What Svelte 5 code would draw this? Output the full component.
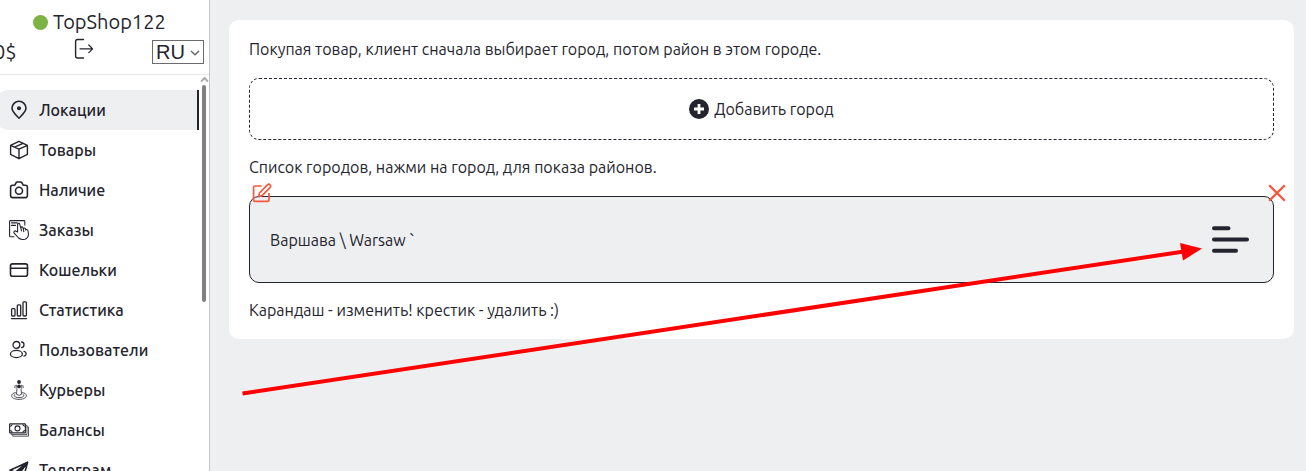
<script>
  const items = [
    { icon: 'pin', label: 'Локации' },
    { icon: 'box', label: 'Товары' },
    { icon: 'camera', label: 'Наличие' },
    { icon: 'order', label: 'Заказы' },
    { icon: 'card', label: 'Кошельки' },
    { icon: 'chart', label: 'Статистика' },
    { icon: 'users', label: 'Пользователи' },
    { icon: 'courier', label: 'Курьеры' },
    { icon: 'cash', label: 'Балансы' },
    { icon: 'plane', label: 'Телеграм' }
  ];
  const active = 'pin';
</script>

<div class="page">
  <aside class="sidebar">
    <header class="head">
      <div class="shop"><span class="dot"></span>TopShop122</div>
      <div class="tools">
        <span class="balance">0$</span>
        <button class="plain exit" aria-label="Выход">
          <svg width="20" height="22" viewBox="0 0 20 22" fill="none" stroke="#24242e" stroke-linecap="round" stroke-linejoin="round">
            <path stroke-width="1.4" d="M9.5 1.5H3.5Q1.6 1.5 1.6 3.5V18Q1.6 20 3.5 20H9.5" />
            <path stroke-width="1.2" d="M6 10.8H18.5M14.8 7L18.6 10.8L14.8 14.6" />
          </svg>
        </button>
        <span class="lang">
          <select aria-label="Язык"><option>RU</option></select>
          <svg width="10" height="6" viewBox="0 0 10 6" fill="none" stroke="#666" stroke-width="1.4"><path d="M1 1L5 4.8L9 1" /></svg>
        </span>
      </div>
    </header>

    <div class="body">
      <nav>
        {#each items as item}
          <a href="#{item.icon}" class:active={item.icon === active}>
            <svg width="20" height="20" viewBox="0 0 20 20" fill="none" stroke="#24242e" stroke-width="1.6" stroke-linecap="round" stroke-linejoin="round">
              {#if item.icon === 'pin'}
                <path d="M10 18.2C7.2 15.2 3 11.5 3 8.2A7 6.9 0 0 1 17 8.2C17 11.5 12.8 15.2 10 18.2Z" />
                <circle cx="10" cy="8.3" r="2" fill="#24242e" stroke="none" />
              {:else if item.icon === 'box'}
                <path stroke-width="1.4" d="M10 1.4L18.4 5.4V14.4L10 18.7L1.6 14.4V5.4ZM1.6 5.4L10 9.2L18.4 5.4M10 9.2V18.7M5.6 7.2L14 3.3" />
              {:else if item.icon === 'camera'}
                <path d="M3.6 5.2H5.2Q6 5.2 6.4 4.2L7 2.9Q7.4 2 8.4 2H11.6Q12.6 2 13 2.9L13.6 4.2Q14 5.2 14.8 5.2H16.4Q18.4 5.2 18.4 7.2V15.6Q18.4 17.6 16.4 17.6H3.6Q1.6 17.6 1.6 15.6V7.2Q1.6 5.2 3.6 5.2Z" />
                <circle cx="10" cy="10.8" r="3.5" />
              {:else if item.icon === 'order'}
                <path stroke-width="1.1" d="M5 16.8H1.4Q.6 16.8.6 16V1.4Q.6.6 1.4.6H15Q15.8.6 15.8 1.4V5" />
                <path stroke-width="1.3" d="M2.6 2.8H8M2.6 5.4H6.4" />
                <path stroke-width="1.1" fill="#fff" d="M8.6 12L8.6 4.4Q8.7 3.4 9.6 3.4Q10.6 3.4 10.8 4.4L12 8.6V7.6Q12.2 6.8 13 6.9Q13.8 7 14 7.8L14.4 9.4V8.6Q14.8 7.8 15.6 8.1Q16.3 8.3 16.5 9.2L16.8 10.2Q17 9.2 17.9 9.5Q18.8 9.8 19 11L19.5 14Q19.4 18 16 19.2Q12 20 9.6 18L5 12.8Q4.6 11.8 5.4 11.2Q6.4 10.6 7.2 11.2ZM12 8.6L12.5 11M14.4 9.4L14.8 11.6" />
              {:else if item.icon === 'card'}
                <rect x="1.5" y="3.9" width="17" height="12.4" rx="2" />
                <path d="M1.5 8.2H18.5" />
              {:else if item.icon === 'chart'}
                <path stroke-width="1.3" d="M2.5 18.6H17.5" />
                <rect x="2.6" y="8.6" width="3.4" height="7.4" rx=".9" stroke-width="1.3" />
                <rect x="8.3" y="4.9" width="3.4" height="11.1" rx=".9" stroke-width="1.3" />
                <rect x="14" y="1.9" width="3.4" height="14.1" rx=".9" stroke-width="1.3" />
              {:else if item.icon === 'users'}
                <g stroke-width="1.3">
                  <circle cx="7.4" cy="4.9" r="3.4" />
                  <ellipse cx="7.4" cy="14" rx="6" ry="3.6" />
                  <path d="M12.6 2C15.8 2.2 15.8 7.4 12.6 7.6M15 11.4C17.8 12 17.8 15.6 15 16.2" />
                </g>
              {:else if item.icon === 'courier'}
                <g stroke-width=".9">
                  <circle cx="10" cy="2" r="1.9" fill="#24242e" stroke="none" />
                  <circle cx="10" cy="6.4" r="1.9" fill="#24242e" stroke="none" />
                  <path stroke-width=".7" d="M6.2 5.4L5.7 7.6M13.8 5.4L14.3 7.6M7.4 5.2L7.2 8.4M12.6 5.2L12.8 8.4" />
                  <path stroke-width=".8" d="M8 9.2L7.4 14.2Q10 16.6 12.6 14.2L12 9.2M6.4 12.6C.6 13.6 1 19.2 10 19.4C19 19.2 19.4 13.6 13.6 12.6M6 14.4C3.8 15.4 5.6 17.6 10 17.6C14.4 17.6 16.2 15.4 14 14.4" />
                </g>
              {:else if item.icon === 'cash'}
                <g stroke-width="1.1">
                  <rect x=".6" y="3.9" width="15.8" height="9" rx=".4" />
                  <circle cx="8.5" cy="8.4" r="2.5" />
                  <path d="M1.4 6.3Q2.8 6 3.1 4.7M1.4 10.6Q2.8 10.8 3.1 12.2M15.7 6.3Q14.2 6 13.9 4.7M15.7 10.6Q14.2 10.8 13.9 12.2" />
                  <path stroke-width=".9" stroke="#44444c" d="M2.2 13.2V14.6H18V5.4H16.8M3.8 14.8V16.2H19.5V7H18.2" />
                </g>
              {:else}
                <path d="M18.6 2.2L1 10.2L6.4 12.2L7.4 18L10.2 13.8L14.8 16.6ZM6.4 12.2L18.6 2.2L10.2 13.8" />
                <path fill="#24242e" stroke="none" d="M6.4 12.2L18.6 2.2L10.2 13.8L7.4 18Z" />
              {/if}
            </svg>
            {item.label}
          </a>
        {/each}
      </nav>
      <div class="track" aria-hidden="true">
        <svg width="9" height="7" viewBox="0 0 9 7" fill="none" stroke="#aaa" stroke-width="2"><path d="M1 5.6L4.5 2L8 5.6" /></svg>
        <span class="thumb"></span>
      </div>
    </div>
  </aside>

  <main>
    <section class="panel">
      <p>Покупая товар, клиент сначала выбирает город, потом район в этом городе.</p>
      <button class="add">
        <svg width="20" height="20" viewBox="0 0 20 20"><circle cx="10" cy="10" r="10" fill="#24242e" /><path d="M10 5V15M5 10H15" stroke="#fff" stroke-width="2.8" /></svg>
        Добавить город
      </button>
      <p>Список городов, нажми на город, для показа районов.</p>
      <div class="city">
        <button class="row">
          <span>Варшава \ Warsaw `</span>
          <svg width="40" height="30" viewBox="0 0 40 30" stroke="#24242e" stroke-width="4" stroke-linecap="round"><path d="M3 3.2H17.5M3 14.5H36M3 25.8H25" /></svg>
        </button>
        <button class="plain edit" aria-label="Изменить">
          <svg width="20" height="20" viewBox="0 0 20 20" fill="none" stroke="#f9573e" stroke-width="1.7" stroke-linecap="round" stroke-linejoin="round">
            <path d="M9 3H3Q1.6 3 1.6 4.4V17Q1.6 18.4 3 18.4H15.6Q17 18.4 17 17V10.6" />
            <path d="M6.8 13.6L7.4 10L15.6 1.7Q16.8.7 18 1.8Q19.2 3 18.2 4.3L10 12.6Z" />
          </svg>
        </button>
        <button class="plain remove" aria-label="Удалить">
          <svg width="18" height="18" viewBox="0 0 18 18" stroke="#f9573e" stroke-width="2.3"><path d="M1.2 1.2L16.8 16.8M16.8 1.2L1.2 16.8" /></svg>
        </button>
      </div>
      <p>Карандаш - изменить! крестик - удалить :)</p>
    </section>
  </main>

  <svg class="pointer" width="1210" height="400" viewBox="0 0 1210 400" aria-hidden="true">
    <path d="M242.5 393.5L1184 251.5" stroke="#f00" stroke-width="4" />
    <path d="M1202 248.5L1180 243L1183 260.5Z" fill="#f00" />
  </svg>
</div>

<style>
  :global(body) { margin: 0; background: #eeeff1; }
  .page {
    position: relative;
    display: flex;
    height: 100vh;
    overflow: hidden;
    color: #24242e;
    font: 16px/22px Ubuntu, "Noto Sans", sans-serif;
  }
  .page :is(*, *::before) { box-sizing: border-box; }
  svg { display: block; flex: none; }
  button { font: inherit; color: inherit; cursor: pointer; }
  .plain { padding: 0; border: 0; background: none; }
  .sidebar {
    display: flex;
    flex-direction: column;
    flex: 0 0 210px;
    overflow: hidden;
    background: #fff;
    border-right: 1px solid #c4c6ca;
  }
  .head {
    flex: none;
    padding: 8px 5px 8px 0;
    border-bottom: 1px solid #e6e7e9;
    font-size: 20px;
    line-height: 28px;
  }
  .shop { display: flex; align-items: center; gap: 5px; padding-left: 33px; }
  .dot { width: 15px; height: 15px; border-radius: 50%; background: #7cb342; }
  .tools { display: flex; align-items: center; justify-content: space-between; height: 30px; padding-top: 2px; margin-left: -6px; }
  .exit { padding-bottom: 6px; }
  .lang { position: relative; }
  .lang select {
    display: block;
    width: 52px;
    height: 24px;
    padding: 0 3px;
    appearance: none;
    border: 1px solid #6b6b70;
    border-radius: 0;
    background: #fff;
    color: #24242e;
    font: 20px/22px "Liberation Sans", sans-serif;
  }
  .lang svg { position: absolute; right: 4px; top: 10px; pointer-events: none; }
  .body { display: flex; flex: 1; min-height: 0; }
  nav { flex: 1; min-width: 0; padding-top: 15px; overflow: hidden; }
  nav a {
    display: flex;
    align-items: center;
    gap: 10px;
    height: 40px;
    padding-left: 13px;
    margin-left: -4px;
    border-right: 2px solid transparent;
    border-radius: 12px 0 0 12px;
    color: inherit;
    font-weight: 500;
    text-decoration: none;
    white-space: nowrap;
  }
  nav a.active { background: #eeeff1; border-color: #24242e; }
  .track { display: flex; flex-direction: column; align-items: center; flex: 0 0 10px; gap: 2px; padding-top: 1px; }
  .thumb { width: 4px; flex: 0 0 55%; border-radius: 2px; background: #808080; }
  main { flex: 1; min-width: 0; padding: 20px 12px 20px 19px; }
  .panel { padding: 18px 20px; border-radius: 10px; background: #fff; }
  p { margin: 0 0 18px; }
  p:last-child { margin: 0; }
  .add {
    display: flex;
    align-items: center;
    justify-content: center;
    gap: 5px;
    width: 100%;
    height: 62px;
    margin-bottom: 16px;
    border: 1px dashed #24242e;
    border-radius: 10px;
    background: #fff;
  }
  .city { position: relative; margin-bottom: 16px; }
  .row {
    display: flex;
    align-items: center;
    justify-content: space-between;
    width: 100%;
    height: 87px;
    padding: 0 22px 0 20px;
    border: 1px solid #24242e;
    border-radius: 10px;
    background: #eeeff1;
  }
  .edit { position: absolute; left: 3px; top: -13px; }
  .remove { position: absolute; right: -12px; top: -12px; }
  .pointer { position: absolute; left: 0; top: 0; pointer-events: none; }
</style>
